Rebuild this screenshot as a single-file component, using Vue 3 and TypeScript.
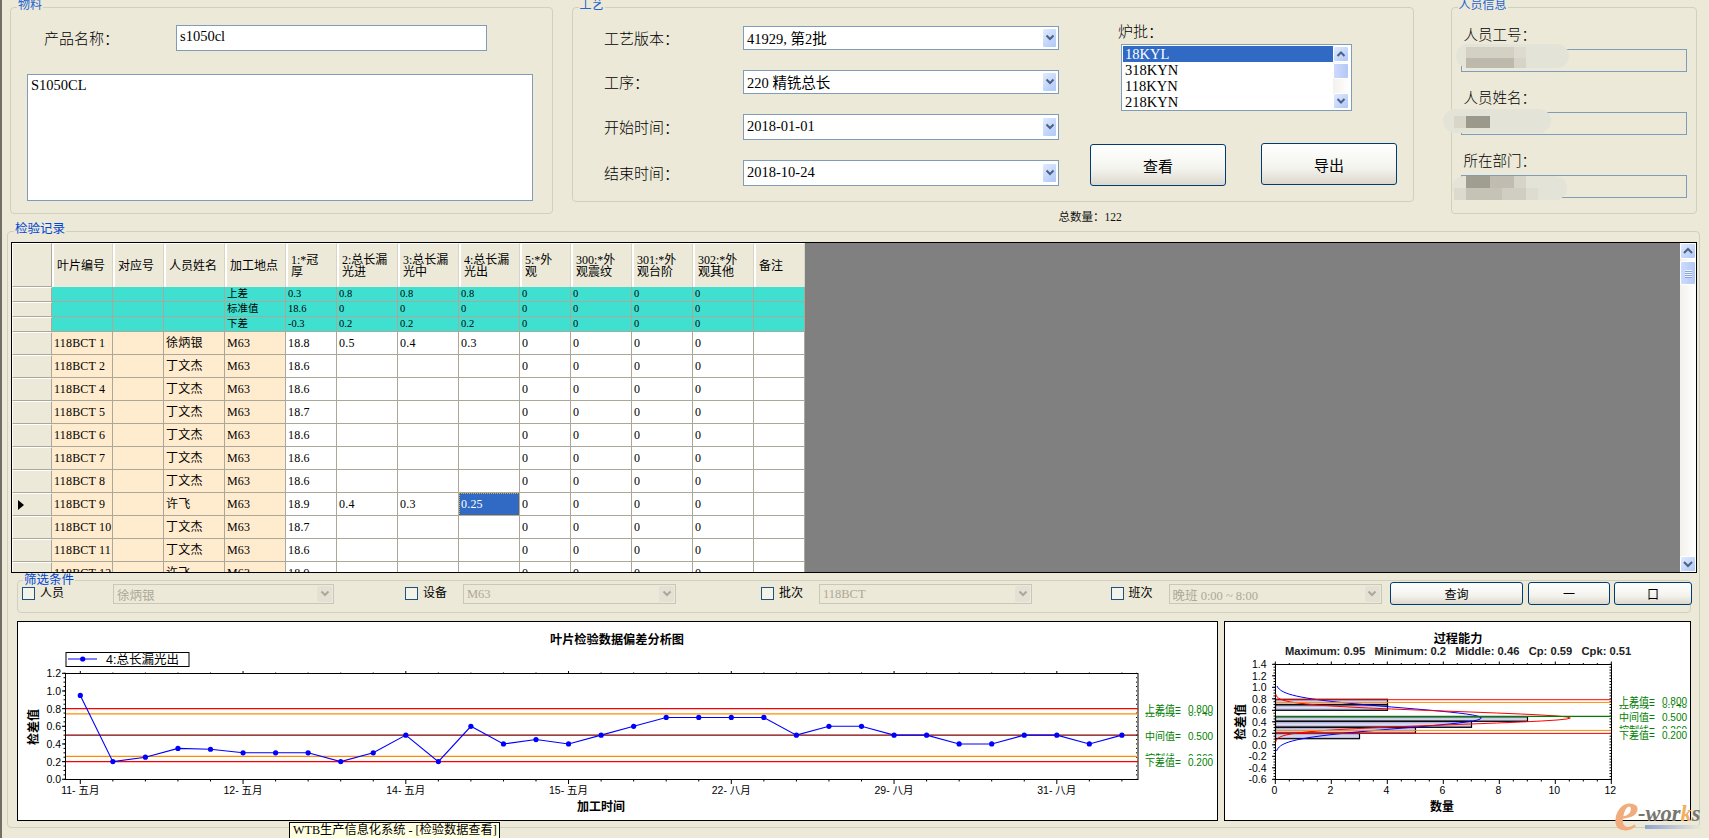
<script setup lang="ts">
import { computed } from 'vue'

const craftRows = [
  { label: '工艺版本：', value: '41929, 第2批', tall: false },
  { label: '工序：', value: '220 精铣总长', tall: false },
  { label: '开始时间：', value: '2018-01-01', tall: true },
  { label: '结束时间：', value: '2018-10-24', tall: true },
]
const batches = ['18KYL', '318KYN', '118KYN', '218KYN']

const people = [
  { label: '人员工号：' },
  { label: '人员姓名：' },
  { label: '所在部门：' },
]

// blurred out names in the person panel
const smudges = [
  { l: 4, t: 36, w: 113, h: 24, c: '#e3e3d8', r: 12 },
  { l: -9, t: 101, w: 108, h: 24, c: '#e3e3d8', r: 12 },
  { l: 0, t: 168, w: 115, h: 24, c: '#e3e3d8', r: 12 },
  { l: 14, t: 39, w: 48, h: 11, c: '#d3d1c4', r: 0 },
  { l: 62, t: 39, w: 12, h: 11, c: '#dddbcf', r: 0 },
  { l: 14, t: 50, w: 48, h: 10, c: '#bdb9ac', r: 0 },
  { l: 62, t: 50, w: 12, h: 10, c: '#d6d4c8', r: 0 },
  { l: 2, t: 108, w: 12, h: 12, c: '#d8d6c9', r: 0 },
  { l: 14, t: 108, w: 24, h: 12, c: '#9b988c', r: 0 },
  { l: 14, t: 168, w: 24, h: 12, c: '#a09d91', r: 0 },
  { l: 38, t: 168, w: 24, h: 12, c: '#c0bdb0', r: 0 },
  { l: 62, t: 168, w: 12, h: 12, c: '#d6d4c8', r: 0 },
  { l: 2, t: 180, w: 12, h: 12, c: '#dcdace', r: 0 },
  { l: 14, t: 180, w: 36, h: 12, c: '#c5c2b6', r: 0 },
  { l: 50, t: 180, w: 24, h: 12, c: '#d0cec2', r: 0 },
  { l: 74, t: 180, w: 12, h: 12, c: '#dedcd0', r: 0 },
]

const headers = [
  '叶片编号', '对应号', '人员姓名', '加工地点', '1:*冠\n厚', '2:总长漏\n光进', '3:总长漏\n光中',
  '4:总长漏\n光出', '5:*外\n观', '300:*外\n观震纹', '301:*外\n观台阶', '302:*外\n观其他', '备注',
]
const limits = [
  ['', '', '', '上差', '0.3', '0.8', '0.8', '0.8', '0', '0', '0', '0', ''],
  ['', '', '', '标准值', '18.6', '0', '0', '0', '0', '0', '0', '0', ''],
  ['', '', '', '下差', '-0.3', '0.2', '0.2', '0.2', '0', '0', '0', '0', ''],
]
const records = [
  ['118BCT 1', '徐炳银', '18.8', '0.5', '0.4', '0.3'],
  ['118BCT 2', '丁文杰', '18.6', '', '', ''],
  ['118BCT 4', '丁文杰', '18.6', '', '', ''],
  ['118BCT 5', '丁文杰', '18.7', '', '', ''],
  ['118BCT 6', '丁文杰', '18.6', '', '', ''],
  ['118BCT 7', '丁文杰', '18.6', '', '', ''],
  ['118BCT 8', '丁文杰', '18.6', '', '', ''],
  ['118BCT 9', '许飞', '18.9', '0.4', '0.3', '0.25'],
  ['118BCT 10', '丁文杰', '18.7', '', '', ''],
  ['118BCT 11', '丁文杰', '18.6', '', '', ''],
  ['118BCT 12', '许飞', '18.9', '', '', ''],
]
const ACTIVE_ROW = 7

const filters = [
  { label: '人员', value: '徐炳银' },
  { label: '设备', value: 'M63' },
  { label: '批次', value: '118BCT' },
  { label: '班次', value: '晚班 0:00 ~ 8:00' },
]

// left chart, numbers are page pixels so the svg viewBox lines up with the page
const lx = (i: number) => 80.3 + i * 32.55
const ly = (v: number) => 779.3 - v * 88.33
const series = [
  0.95, 0.2, 0.25, 0.35, 0.34, 0.3, 0.3, 0.3, 0.2, 0.3, 0.5, 0.2, 0.6, 0.4, 0.45, 0.4, 0.5,
  0.6, 0.7, 0.7, 0.7, 0.7, 0.5, 0.6, 0.6, 0.5, 0.5, 0.4, 0.4, 0.5, 0.5, 0.4, 0.5,
]
const seriesLine = computed(() => series.map((v, i) => `${lx(i)},${ly(v)}`).join(' '))
const leftDates = [
  { i: 0, t: '11- 五月' }, { i: 5, t: '12- 五月' }, { i: 10, t: '14- 五月' }, { i: 15, t: '15- 五月' },
  { i: 20, t: '22- 八月' }, { i: 25, t: '29- 八月' }, { i: 30, t: '31- 八月' },
]
const leftMajors = [0, 0.2, 0.4, 0.6, 0.8, 1, 1.2]
const leftMinors = Array.from({ length: 25 }, (_, i) => i * 0.05)
const leftLines = [
  { v: 0.8, c: '#ff0000' }, { v: 0.74, c: '#ff8c00' }, { v: 0.5, c: '#800000' },
  { v: 0.26, c: '#ff8c00' }, { v: 0.2, c: '#ff0000' },
]

// right chart
const rx = (n: number) => 1275.3 + n * 28
const ry = (v: number) => 744.8 - v * 57.5
const rightMajors = [-0.6, -0.4, -0.2, 0, 0.2, 0.4, 0.6, 0.8, 1, 1.2, 1.4]
const rightMinors = Array.from({ length: 41 }, (_, i) => -0.6 + i * 0.05)
const countTicks = [0, 2, 4, 6, 8, 10, 12]
const countMinors = Array.from({ length: 25 }, (_, i) => i * 0.5)
const statsLine = ['Maximum: 0.95', 'Minimum: 0.2', 'Middle: 0.46', 'Cp: 0.59', 'Cpk: 0.51'].join('\u00a0\u00a0\u00a0')
const bars = [
  { t: 699.3, b: 704.8, n: 4 },
  { t: 704.8, b: 710.3, n: 4 },
  { t: 716.7, b: 721.3, n: 9 },
  { t: 721.3, b: 727.3, n: 7 },
  { t: 727.3, b: 733.3, n: 5 },
  { t: 733.3, b: 738.7, n: 3 },
]
const bell = (peak: number, s: number, from: number, to: number) => {
  const pts: string[] = []
  for (let y = from; y <= to; y += 1) {
    const d = y - 718
    pts.push(`${(1275.3 + peak * Math.exp(-(d * d) / (2 * s * s))).toFixed(1)},${y}`)
  }
  return pts.join(' ')
}
const blueBell = bell(206, 10.3, 686, 751)
const redBell = bell(295, 6.6, 694, 742)
</script>

<template>
  <div class="page">
    <div class="top-row">
      <section class="group material">
        <span class="group-title">物料</span>
        <div class="product-line">
          <span class="product-label">产品名称：</span>
          <div class="field product-input">s1050cl</div>
        </div>
        <div class="field product-list">S1050CL</div>
      </section>

      <div class="craft-column">
        <section class="group craft">
          <span class="group-title">工艺</span>
          <div class="craft-form">
            <template v-for="row in craftRows" :key="row.label">
              <span class="craft-label">{{ row.label }}</span>
              <div class="field combo" :class="{ tall: row.tall }">
                <span class="combo-text">{{ row.value }}</span>
                <span class="drop-btn">
                  <svg width="10" height="8" viewBox="0 0 10 8"><path d="M1.5 1.5 5 5l3.5-3.5" fill="none" stroke="#4d6185" stroke-width="2" /></svg>
                </span>
              </div>
            </template>
          </div>
          <div class="batch-side">
            <span class="batch-label">炉批：</span>
            <div class="listbox">
              <ul class="list-rows">
                <li v-for="(b, i) in batches" :key="b" :class="{ picked: i === 0 }">{{ b }}</li>
              </ul>
              <div class="list-scroll">
                <span class="scroll-btn">
                  <svg width="10" height="8" viewBox="0 0 10 8"><path d="M1.5 6 5 2.5 8.5 6" fill="none" stroke="#4d6185" stroke-width="2" /></svg>
                </span>
                <span class="scroll-thumb"></span>
                <span class="scroll-gap"></span>
                <span class="scroll-btn">
                  <svg width="10" height="8" viewBox="0 0 10 8"><path d="M1.5 2 5 5.5 8.5 2" fill="none" stroke="#4d6185" stroke-width="2" /></svg>
                </span>
              </div>
            </div>
            <div class="action-row">
              <button class="xp-btn view-btn">查看</button>
              <button class="xp-btn export-btn">导出</button>
            </div>
          </div>
        </section>
        <div class="total-line">总数量：122</div>
      </div>

      <section class="group person">
        <span class="group-title">人员信息</span>
        <template v-for="p in people" :key="p.label">
          <span class="person-label">{{ p.label }}</span>
          <div class="person-input"></div>
        </template>
        <div class="smudges">
          <i
            v-for="(s, i) in smudges"
            :key="i"
            :style="{ left: s.l + 'px', top: s.t + 'px', width: s.w + 'px', height: s.h + 'px', background: s.c, borderRadius: s.r + 'px' }"
          ></i>
        </div>
      </section>
    </div>

    <section class="group records">
      <span class="group-title strong">检验记录</span>

      <div class="grid-box">
        <div class="grid-table">
          <div class="row head-row">
            <div class="row-head"></div>
            <div v-for="h in headers" :key="h" class="head-cell">{{ h }}</div>
          </div>
          <div v-for="(line, r) in limits" :key="'l' + r" class="row limit-row">
            <div class="row-head"></div>
            <div v-for="(c, i) in line" :key="i" class="limit-cell">{{ c }}</div>
          </div>
          <div v-for="(rec, r) in records" :key="rec[0]" class="row data-row">
            <div class="row-head">
              <svg v-if="r === ACTIVE_ROW" class="row-arrow" width="6" height="10" viewBox="0 0 6 10"><path d="M0 0 6 5 0 10Z" fill="#000" /></svg>
            </div>
            <div class="cell peach">{{ rec[0] }}</div>
            <div class="cell peach"></div>
            <div class="cell peach">{{ rec[1] }}</div>
            <div class="cell peach">M63</div>
            <div class="cell">{{ rec[2] }}</div>
            <div class="cell">{{ rec[3] }}</div>
            <div class="cell">{{ rec[4] }}</div>
            <div class="cell" :class="{ active: r === ACTIVE_ROW }">{{ rec[5] }}</div>
            <div class="cell">0</div>
            <div class="cell">0</div>
            <div class="cell">0</div>
            <div class="cell">0</div>
            <div class="cell"></div>
          </div>
        </div>
        <div class="grid-empty"></div>
        <div class="grid-scroll">
          <span class="grid-btn">
            <svg width="12" height="8" viewBox="0 0 12 8"><path d="M2 6 6 2l4 4" fill="none" stroke="#4d6185" stroke-width="2" /></svg>
          </span>
          <span class="grid-thumb"><b></b><b></b><b></b><b></b></span>
          <span class="scroll-gap"></span>
          <span class="grid-btn">
            <svg width="12" height="8" viewBox="0 0 12 8"><path d="M2 2l4 4 4-4" fill="none" stroke="#4d6185" stroke-width="2" /></svg>
          </span>
        </div>
      </div>

      <div class="filter-box">
        <span class="group-title strong filter-title">筛选条件</span>
        <div v-for="(f, i) in filters" :key="f.label" class="filter-item" :class="{ wide: i === 0 }">
          <span class="check"></span>
          <span class="filter-label">{{ f.label }}</span>
          <div class="off-combo">
            <span>{{ f.value }}</span>
            <span class="off-btn">
              <svg width="10" height="8" viewBox="0 0 10 8"><path d="M1.5 1.5 5 5l3.5-3.5" fill="none" stroke="#aca899" stroke-width="2" /></svg>
            </span>
          </div>
        </div>
        <div class="filter-actions">
          <button class="xp-btn small query">查询</button>
          <button class="xp-btn small minus">一</button>
          <button class="xp-btn small square">口</button>
        </div>
      </div>

      <div class="chart-row">
        <div class="chart chart-left">
          <svg width="1199" height="198" viewBox="18 622 1199 198">
            <text class="title-cn" x="617" y="643.5" text-anchor="middle">叶片检验数据偏差分析图</text>

            <rect x="66" y="652.5" width="123" height="14" fill="#fff" stroke="#000" />
            <line x1="68" y1="659" x2="97" y2="659" stroke="#0000ff" />
            <circle cx="82.7" cy="659" r="2.6" fill="#0000ff" />
            <text class="legend-cn" x="106" y="664">4:总长漏光出</text>

            <rect x="65.5" y="673.5" width="1072.5" height="106" fill="#fff" stroke="#000" />
            <g stroke="#000">
              <line v-for="m in leftMinors" :key="'a' + m" x1="63.5" :y1="ly(m)" x2="65.5" :y2="ly(m)" />
              <line v-for="m in leftMinors" :key="'b' + m" x1="1136" :y1="ly(m)" x2="1138" :y2="ly(m)" stroke-dasharray="1 1" />
              <line v-for="m in leftMajors" :key="'c' + m" x1="62" :y1="ly(m)" x2="65.5" :y2="ly(m)" />
              <template v-for="(_, i) in series" :key="'d' + i">
                <line :x1="lx(i)" y1="779.5" :x2="lx(i)" :y2="i % 5 === 0 ? 784 : 781.5" />
                <line :x1="lx(i)" y1="673.5" :x2="lx(i)" :y2="i % 5 === 0 ? 671 : 672.5" />
              </template>
            </g>
            <text v-for="m in leftMajors" :key="'e' + m" class="tick" x="61" :y="ly(m) + 4" text-anchor="end">{{ m.toFixed(1) }}</text>
            <text v-for="d in leftDates" :key="d.t" class="date" :x="lx(d.i)" y="793.5" text-anchor="middle">{{ d.t }}</text>
            <text class="axis-cn" x="601" y="810.5" text-anchor="middle">加工时间</text>
            <text class="axis-cn" x="38" y="727" text-anchor="middle" transform="rotate(-90 38 727)">检差值</text>

            <line v-for="l in leftLines" :key="l.v" x1="66" :y1="ly(l.v)" x2="1138" :y2="ly(l.v)" :stroke="l.c" stroke-width="1.2" />
            <polyline :points="seriesLine" fill="none" stroke="#0000ff" stroke-width="1.1" />
            <circle v-for="(v, i) in series" :key="'p' + i" :cx="lx(i)" :cy="ly(v)" r="2.6" fill="#0000ff" />

            <g class="limit-label">
              <text x="1145" y="716">控制线=</text>
              <text class="limit-num" x="1188" y="716">0.740</text>
              <rect x="1143" y="700" width="70" height="12.5" fill="#fff" />
              <text x="1145" y="712.5">上差值=</text>
              <text class="limit-num" x="1188" y="712.5">0.800</text>
              <text x="1145" y="739.5">中间值=</text>
              <text class="limit-num" x="1188" y="739.5">0.500</text>
              <text x="1145" y="762">控制线=</text>
              <text class="limit-num" x="1188" y="762">0.260</text>
              <rect x="1143" y="756" width="70" height="12" fill="#fff" />
              <text x="1145" y="766">下差值=</text>
              <text class="limit-num" x="1188" y="766">0.200</text>
            </g>
          </svg>
        </div>

        <div class="chart chart-right">
          <svg width="465" height="198" viewBox="1225 622 465 198">
            <defs>
              <linearGradient id="barFill" x1="0" y1="0" x2="0" y2="1">
                <stop offset="0" stop-color="#8e8ec4" />
                <stop offset="0.5" stop-color="#e2e3f2" />
                <stop offset="1" stop-color="#9a9aca" />
              </linearGradient>
            </defs>
            <text class="title-cn" x="1458" y="642.5" text-anchor="middle">过程能力</text>
            <text class="stats" x="1285" y="655">{{ statsLine }}</text>

            <rect x="1275.5" y="664.5" width="336" height="115" fill="#fff" stroke="#000" />
            <g stroke="#000">
              <template v-for="m in rightMinors" :key="'ra' + m">
                <line x1="1273.5" :y1="ry(m)" x2="1275.5" :y2="ry(m)" />
                <line x1="1609.5" :y1="ry(m)" x2="1611.5" :y2="ry(m)" />
              </template>
              <line v-for="m in rightMajors" :key="'rb' + m" x1="1272" :y1="ry(m)" x2="1275.5" :y2="ry(m)" />
              <template v-for="n in countMinors" :key="'rc' + n">
                <line :x1="rx(n)" y1="779.5" :x2="rx(n)" :y2="n % 2 === 0 ? 784 : 781.5" />
                <line :x1="rx(n)" y1="664.5" :x2="rx(n)" :y2="n % 2 === 0 ? 661.5 : 663" />
              </template>
            </g>
            <text v-for="m in rightMajors" :key="'rd' + m" class="tick" x="1266.5" :y="ry(m) + 4" text-anchor="end">{{ m.toFixed(1) }}</text>
            <text v-for="n in countTicks" :key="'re' + n" class="tick" :x="rx(n) - 1" y="793.5" text-anchor="middle">{{ n }}</text>
            <text class="axis-cn" x="1442" y="810.5" text-anchor="middle">数量</text>
            <text class="axis-cn" x="1245" y="722" text-anchor="middle" transform="rotate(-90 1245 722)">检差值</text>

            <rect
              v-for="b in bars"
              :key="b.t"
              x="1275.5"
              :y="b.t"
              :width="b.n * 28"
              :height="b.b - b.t"
              fill="url(#barFill)"
              stroke="#000"
              stroke-width="1.2"
            />
            <polyline :points="blueBell" fill="none" stroke="#0000ff" />
            <polyline :points="redBell" fill="none" stroke="#ff0000" />
            <line x1="1276" y1="699.7" x2="1611" y2="699.7" stroke="#ff0000" />
            <line x1="1276" y1="702.4" x2="1611" y2="702.4" stroke="#ff8c00" />
            <line x1="1276" y1="716.4" x2="1611" y2="716.4" stroke="#008000" stroke-width="1.2" />
            <line x1="1276" y1="730.4" x2="1611" y2="730.4" stroke="#ff8c00" />
            <line x1="1276" y1="733.4" x2="1611" y2="733.4" stroke="#ff0000" />

            <g class="limit-label">
              <text x="1619" y="708">控制线=</text>
              <text class="limit-num" x="1662" y="708">0.740</text>
              <rect x="1617" y="692" width="70" height="13" fill="#fff" />
              <text x="1619" y="704.5">上差值=</text>
              <text class="limit-num" x="1662" y="704.5">0.800</text>
              <text x="1619" y="720.5">中间值=</text>
              <text class="limit-num" x="1662" y="720.5">0.500</text>
              <text x="1619" y="734">控制线=</text>
              <text class="limit-num" x="1662" y="734">0.260</text>
              <rect x="1617" y="729" width="70" height="15" fill="#fff" />
              <text x="1619" y="738.5">下差值=</text>
              <text class="limit-num" x="1662" y="738.5">0.200</text>
            </g>
          </svg>
        </div>
      </div>
    </section>

    <div class="task-tip">WTB生产信息化系统 - [检验数据查看]</div>
    <div class="eworks">
      <span class="e">e</span><span class="works">-wor<em>k</em>s</span>
      <span class="e-bar"></span>
    </div>
  </div>
</template>

<style>
html,
body {
  margin: 0;
  background: #fff;
}
</style>

<style scoped>
.page {
  position: relative;
  box-sizing: border-box;
  width: 1709px;
  height: 838px;
  overflow: hidden;
  border-left: 2px solid #716f64;
  background: #ece9d8;
  padding-top: 7px;
  color: #000;
  font-family: "Liberation Serif", "Noto Sans CJK SC", serif;
  font-size: 14px;
}

.group {
  position: relative;
  box-sizing: border-box;
  border: 1px solid #d0d0bf;
  border-radius: 4px;
}

.group-title {
  position: absolute;
  left: 6px;
  top: -10px;
  padding: 0 1px;
  background: #ece9d8;
  color: #2464cf;
  font-size: 12px;
  line-height: 14px;
}

.group-title.strong {
  color: #0046d5;
  font-size: 12.5px;
}

.top-row {
  display: flex;
  align-items: flex-start;
  margin-left: 8px;
  height: 207px;
}

/* 物料 */
.material {
  width: 543px;
  height: 207px;
  padding: 17px 0 0 16px;
}

.product-line {
  display: flex;
  align-items: center;
  height: 26px;
}

.product-label {
  width: 149px;
  padding: 0 0 2px 17px;
  box-sizing: border-box;
  font-size: 15px;
  font-weight: 300;
}

.field {
  box-sizing: border-box;
  border: 1px solid #7f9db9;
  background: #fff;
  padding: 0 3px;
  font-size: 14.5px;
}

.product-input {
  width: 311px;
  height: 26px;
  line-height: 21px;
}

.product-list {
  width: 506px;
  height: 127px;
  margin-top: 23px;
  line-height: 21px;
}

/* 工艺 */
.craft-column {
  margin-left: 18.5px;
}

.craft {
  display: flex;
  width: 842px;
  height: 195px;
  padding: 18px 0 0 31.5px;
}

.craft-form {
  display: grid;
  grid-template-columns: 139px 316px;
  row-gap: 20px;
  align-items: center;
  align-content: start;
}

.craft-label {
  padding-bottom: 2px;
  font-size: 15px;
  font-weight: 300;
}

.combo {
  display: flex;
  align-items: center;
  justify-content: space-between;
  height: 24px;
  padding-right: 1px;
}

.combo.tall {
  height: 26px;
}

.combo-text {
  padding-bottom: 2px;
}

.drop-btn {
  display: flex;
  align-items: center;
  justify-content: center;
  box-sizing: border-box;
  width: 15px;
  height: 20px;
  border: 1px solid #fff;
  border-radius: 2px;
  background: linear-gradient(135deg, #e1eafe, #aec8f7);
}

.batch-side {
  width: 307px;
  margin-left: 31px;
  margin-top: -2px;
}

.batch-label {
  display: block;
  padding-left: 28px;
  height: 20px;
  font-size: 15px;
  font-weight: 300;
  line-height: 16px;
}

.listbox {
  display: flex;
  box-sizing: border-box;
  width: 231px;
  height: 67px;
  margin-left: 31px;
  border: 1px solid #7f9db9;
  background: #fff;
  padding: 1px 2px 1px 1px;
}

.list-rows {
  flex: 1;
  margin: 0;
  padding: 0;
  list-style: none;
  font-size: 14.5px;
  line-height: 16px;
  height: 64px;
}

.list-rows li {
  height: 16px;
  padding-left: 2px;
}

.list-rows li.picked {
  background: #316ac5;
  color: #fff;
}

.list-scroll {
  display: flex;
  flex-direction: column;
  width: 16px;
  background: linear-gradient(90deg, #f3f1ec, #fff);
}

.scroll-btn {
  display: flex;
  align-items: center;
  justify-content: center;
  box-sizing: border-box;
  height: 16px;
  border: 1px solid #fff;
  border-radius: 2px;
  background: linear-gradient(135deg, #e1eafe, #aec8f7);
}

.scroll-thumb {
  box-sizing: border-box;
  height: 16px;
  margin-top: 1px;
  border: 1px solid #fff;
  border-radius: 2px;
  background: linear-gradient(90deg, #cddafc, #b4c8f6);
}

.scroll-gap {
  flex: 1;
}

.action-row {
  display: flex;
  margin-top: 33px;
}

.xp-btn {
  box-sizing: border-box;
  border: 1px solid #003c74;
  border-radius: 3px;
  background: linear-gradient(180deg, #fff, #f3f3ee 60%, #dcd8cc);
  color: #000;
  font-family: inherit;
  padding: 0;
}

.view-btn {
  width: 136px;
  height: 42px;
  font-size: 15px;
}

.export-btn {
  width: 136px;
  height: 42px;
  margin: -1px 0 0 35px;
  font-size: 15px;
}

.total-line {
  padding: 8px 0 0 487px;
  font-size: 11.5px;
  line-height: 14px;
  color: #111;
}

/* 人员信息 */
.person {
  width: 246px;
  height: 207px;
  margin-left: 37px;
  padding: 19px 0 0 9px;
}

.person-label {
  display: block;
  padding-left: 3px;
  height: 16px;
  font-size: 14.5px;
  font-weight: 300;
  line-height: 16px;
}

.person-input {
  box-sizing: border-box;
  width: 226px;
  height: 23px;
  margin: 6px 0 18px;
  border: 1px solid #7f9db9;
}

.smudges {
  position: absolute;
  left: 0;
  top: 0;
}

.smudges i {
  position: absolute;
  display: block;
}

/* 检验记录 */
.records {
  width: 1693px;
  height: 597px;
  margin: 17px 0 0 5px;
  padding: 10px 0 0 3px;
}

.grid-box {
  display: flex;
  box-sizing: border-box;
  width: 1686px;
  height: 331px;
  overflow: hidden;
  border: 1px solid #000;
}

.grid-table {
  flex: none;
  width: 793px;
  background: #808080;
}

.row {
  display: grid;
  grid-template-columns: 40px 61px 51px 61px 61px 51px 61px 61px 61px 51px 61px 61px 61px 51px;
  font-size: 12px;
}

.row-head {
  position: relative;
  box-sizing: border-box;
  background: #ece9d8;
  border-top: 1px solid #fff;
  border-bottom: 1px solid #aca899;
  border-left: 1px solid #fff;
  border-right: 1px solid #aca899;
}

.head-row {
  height: 44px;
}

.head-cell {
  display: flex;
  align-items: center;
  box-sizing: border-box;
  background: #ece9d8;
  border-top: 1px solid #fff;
  border-left: 2px solid #fff;
  border-right: 1px solid #d8d5c5;
  padding-left: 3px;
  white-space: pre-line;
  line-height: 12px;
  font-size: 12px;
}

.limit-row {
  height: 15px;
}

.limit-cell {
  box-sizing: border-box;
  background: #40e0d0;
  border-right: 1px solid #aca899;
  border-bottom: 1px solid #aca899;
  padding-left: 2px;
  font-size: 10.5px;
  line-height: 14px;
}

.data-row {
  height: 23px;
}

.cell {
  box-sizing: border-box;
  background: #fff;
  border-right: 1px solid #aca899;
  border-bottom: 1px solid #aca899;
  padding-left: 2px;
  font-size: 12px;
  line-height: 22px;
  letter-spacing: 0.2px;
  white-space: nowrap;
  overflow: hidden;
}

.cell.peach {
  background: #ffebcd;
}

.cell.active {
  background: #316ac5;
  color: #fff;
  outline: 1px dotted #e0b040;
  outline-offset: -1px;
}

.row-arrow {
  position: absolute;
  left: 5px;
  top: 6px;
}

.grid-empty {
  flex: 1;
  background: #808080;
}

.grid-scroll {
  display: flex;
  flex-direction: column;
  width: 16px;
  background: linear-gradient(90deg, #f3f1ec, #fff);
}

.grid-btn {
  display: flex;
  align-items: center;
  justify-content: center;
  box-sizing: border-box;
  height: 16px;
  border: 1px solid #fff;
  border-radius: 2px;
  background: linear-gradient(135deg, #e1eafe, #aec8f7);
}

.grid-thumb {
  display: flex;
  flex-direction: column;
  align-items: center;
  justify-content: center;
  gap: 1px;
  box-sizing: border-box;
  height: 24px;
  margin-top: 2px;
  border: 1px solid #fff;
  border-radius: 2px;
  background: linear-gradient(90deg, #cddafc, #b4c8f6);
}

.grid-thumb b {
  display: block;
  width: 7px;
  height: 1px;
  background: #eef3fe;
  box-shadow: 0 1px 0 #8ca6dc;
}

/* 筛选条件 */
.filter-box {
  position: relative;
  display: grid;
  grid-template-columns: 383px 356px 349.5px 279.5px auto;
  box-sizing: border-box;
  width: 1674px;
  height: 33px;
  margin: 7px 0 0 6px;
  padding: 1px 0 0 4px;
  border: 1px solid #d0d0bf;
  border-radius: 4px;
}

.filter-title {
  left: 5px;
  top: -8px;
}

.filter-item {
  display: flex;
  align-items: flex-start;
}

.check {
  flex: none;
  box-sizing: border-box;
  width: 13px;
  height: 13px;
  margin-top: 5px;
  border: 1px solid #1c5180;
  background: #f4f3ea;
}

.filter-label {
  width: 45px;
  padding-left: 5px;
  box-sizing: border-box;
  font-size: 12px;
  line-height: 23px;
}

.filter-item.wide .filter-label {
  width: 78px;
}

.off-combo {
  display: flex;
  align-items: center;
  justify-content: space-between;
  box-sizing: border-box;
  width: 213px;
  height: 20px;
  margin-top: 2px;
  padding: 0 1px 0 3px;
  border: 1px solid #c9c7ba;
  color: #aca899;
  font-size: 12.5px;
}

.filter-item.wide .off-combo {
  width: 221px;
}

.off-btn {
  display: flex;
  align-items: center;
  justify-content: center;
  width: 15px;
  height: 16px;
  border-radius: 2px;
  background: #e3e1d3;
}

.filter-actions {
  display: flex;
}

.xp-btn.small {
  height: 23px;
  font-size: 12px;
}

.query {
  width: 133px;
}

.minus {
  width: 82px;
  margin-left: 5px;
}

.square {
  width: 78px;
  margin-left: 4px;
}

/* 图表 */
.chart-row {
  display: flex;
  gap: 6px;
  margin: 8px 0 0 6px;
}

.chart {
  box-sizing: border-box;
  height: 200px;
  border: 1px solid #000;
  background: #fff;
}

.chart svg {
  display: block;
}

.chart-left {
  width: 1201px;
}

.chart-right {
  width: 467px;
}

.title-cn {
  font-family: "Liberation Sans", "Noto Sans CJK SC", sans-serif;
  font-size: 12.2px;
  font-weight: 700;
}

.axis-cn {
  font-family: "Liberation Sans", "Noto Sans CJK SC", sans-serif;
  font-size: 12px;
  font-weight: 700;
}

.legend-cn {
  font-family: "Liberation Sans", "Noto Sans CJK SC", sans-serif;
  font-size: 12.5px;
}

.tick {
  font-family: "Liberation Sans", sans-serif;
  font-size: 10.5px;
}

.date {
  font-family: "Liberation Sans", "Noto Sans CJK SC", sans-serif;
  font-size: 10.5px;
}

.stats {
  font-family: "Liberation Sans", sans-serif;
  font-size: 11.2px;
  font-weight: 700;
  fill: #222;
}

.limit-label text {
  font-family: "Liberation Sans", "Noto Sans CJK SC", sans-serif;
  font-size: 10px;
  fill: #008000;
}

.limit-label .limit-num {
  font-size: 10px;
}

/* 压在最上面的提示框和水印 */
.task-tip {
  position: absolute;
  left: 287px;
  top: 822px;
  box-sizing: border-box;
  width: 211px;
  height: 17px;
  border: 1px solid #000;
  background: #ffffe1;
  padding-left: 3px;
  font-size: 12.2px;
  line-height: 15px;
  white-space: nowrap;
}

.eworks {
  position: absolute;
  left: 1612px;
  top: 803px;
  width: 88px;
  height: 28px;
  font-family: "Liberation Serif", serif;
  font-style: italic;
  font-weight: 700;
}

.e {
  position: absolute;
  left: 0;
  top: -20px;
  color: #f2ab7c;
  font-size: 56px;
  line-height: 56px;
}

.works {
  position: absolute;
  left: 24px;
  top: 0;
  color: #77776f;
  font-size: 22.5px;
  line-height: 22.5px;
}

.works em {
  color: #f0b060;
}

.e-bar {
  position: absolute;
  left: 31px;
  top: 22px;
  width: 57px;
  height: 4px;
  background: linear-gradient(90deg, #8ea4cf, #ece9d8);
}
</style>
